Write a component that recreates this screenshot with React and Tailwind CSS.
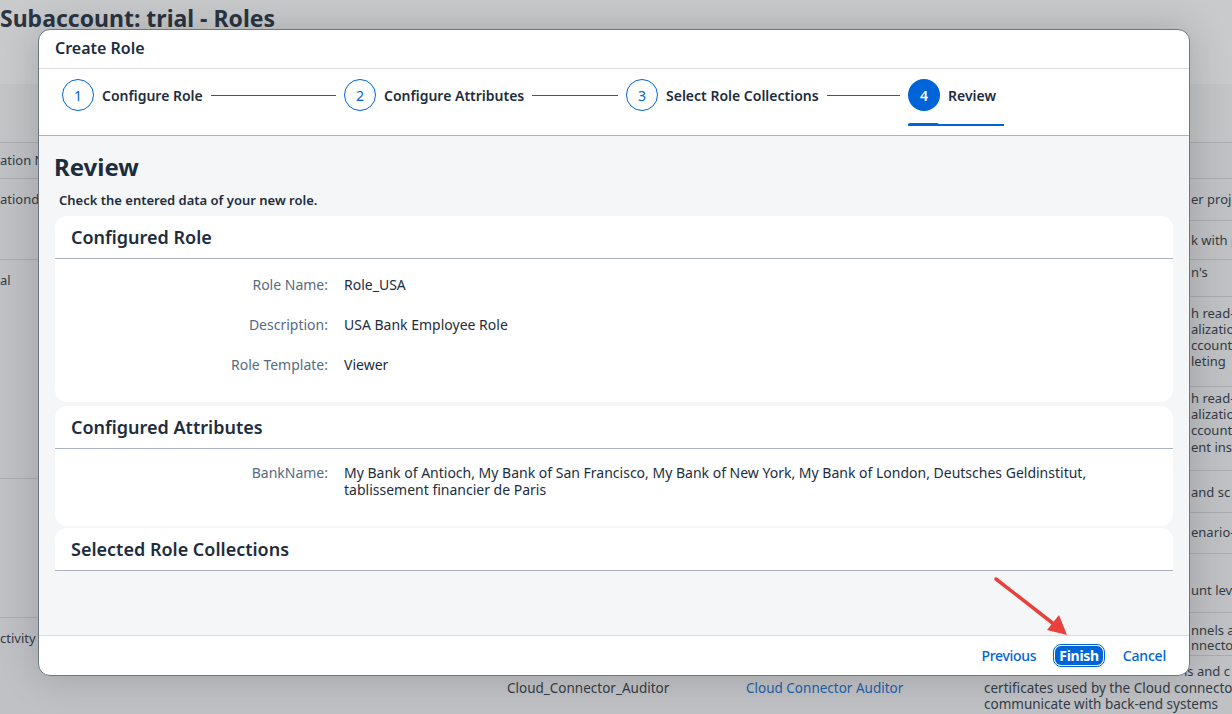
import React from 'react';

const font = { fontFamily: '"Noto Sans", "Open Sans", sans-serif' };

const rightBits = [
  ['er proje', 199], ['k with p', 240], ["n's", 272],
  ['h read-', 313], ['alization', 329], ['ccount', 345], ['leting', 361],
  ['h read-', 398], ['alization', 414], ['ccount', 430], ['ent insta', 447],
  ['and sc', 492], ['enario-r', 532], ['unt lev', 590],
  ['nnels ar', 630], ['nnector', 645],
];
const rightLines = [178, 220, 259, 296, 386, 470, 512, 553, 612, 655];
const leftLines = [178, 259, 478, 617];
const leftBits = [['ation N', 160], ['ationde', 199], ['al', 280], ['ctivity', 638]];

function Background() {
  return (
    <div className="absolute inset-0 bg-[#bfc1c4]">
      <div className="h-[84px] bg-[#c9cacb]" />
      <div className="h-[59px] bg-[#c2c4c6] border-b border-[#a9adb2]" />
      <div className="absolute left-0 top-[4px] text-[23px] font-bold text-[#2a3542] leading-[28px]">
        Subaccount: trial - Roles
      </div>
      {leftLines.map((y) => (
        <div key={y} className="absolute left-0 w-[40px] h-px bg-[#a9adb2]" style={{ top: y }} />
      ))}
      {rightLines.map((y) => (
        <div key={y} className="absolute left-[1180px] right-0 h-px bg-[#a9adb2]" style={{ top: y }} />
      ))}
      {leftBits.map(([t, y]) => (
        <div key={t} className="absolute left-0 text-[13px] leading-[16px] text-[#333c46] whitespace-nowrap" style={{ top: y - 8 }}>{t}</div>
      ))}
      {rightBits.map(([t, y], i) => (
        <div key={i} className="absolute left-[1191px] text-[13px] leading-[16px] text-[#333c46] whitespace-nowrap" style={{ top: y - 8 }}>{t}</div>
      ))}
      <div className="absolute left-[1184px] top-[663px] text-[13px] leading-[16px] text-[#333c46] whitespace-nowrap">ls and c</div>
      <div className="absolute left-[984px] top-[680px] text-[13.5px] leading-[16px] text-[#333c46] whitespace-nowrap">
        certificates used by the Cloud connector to<br />communicate with back-end systems
      </div>
      <div className="absolute left-[507px] top-[680px] text-[13.5px] leading-[16px] text-[#333c46]">Cloud_Connector_Auditor</div>
      <div className="absolute left-[746px] top-[680px] text-[13.5px] leading-[16px] text-[#1f5fa8]">Cloud Connector Auditor</div>
    </div>
  );
}

function Step({ n, label, last, active }) {
  return (
    <div className={last ? 'relative flex items-center pr-2 h-[32px]' : 'flex items-center w-[282px] h-[32px]'}>
      <div
        className={
          active
            ? 'w-[32px] h-[32px] rounded-full bg-[#0064d9] text-white text-[14px] font-semibold flex items-center justify-center shrink-0'
            : 'w-[32px] h-[32px] rounded-full border border-[#0064d9] bg-white text-[#0064d9] text-[14px] flex items-center justify-center shrink-0'
        }
      >
        {n}
      </div>
      <span className="ml-2 text-[14px] font-semibold text-[#1d2d3e] whitespace-nowrap">{label}</span>
      {!last && <div className="flex-1 h-px bg-[#0064d9] mx-2" />}
      {last && (
        <>
          <div className="absolute left-0 right-0 top-[45px] h-[2px] bg-[#0064d9]" />
          <div className="absolute left-0 w-[31px] top-[44px] h-[3px] rounded-t-[2px] bg-[#0064d9]" />
        </>
      )}
    </div>
  );
}

function Card({ title, children, className }) {
  return (
    <div className={'bg-white rounded-[12px] ' + (className || '')}>
      <div className="h-[43px] flex items-center px-4 border-b border-[#a9b4be]">
        <span className="text-[18px] font-semibold text-[#1d2d3e]">{title}</span>
      </div>
      {children}
    </div>
  );
}

function Row({ label, children }) {
  return (
    <div className="flex min-h-[40px] items-center">
      <div className="w-[273px] text-right text-[14px] text-[#556b82] shrink-0">{label}:</div>
      <div className="ml-4 text-[14px] text-[#1d2d3e] leading-[17px]">{children}</div>
    </div>
  );
}

function Dialog() {
  return (
    <div className="absolute left-[38px] top-[29px] w-[1152px] h-[647px] bg-white rounded-[12px] border border-[#6b7785] shadow-[0_0_40px_rgba(0,0,0,0.18)] flex flex-col overflow-hidden">
      <div className="h-[39px] shrink-0 flex items-center px-4 border-b border-[#d9dde1]">
        <span className="text-[16px] font-semibold text-[#1d2d3e] leading-[20px] -mt-[2px]">Create Role</span>
      </div>
      <div className="h-[67px] shrink-0 pt-[10px] pl-[23px] border-b border-[#a9b4be] flex items-start">
        <Step n="1" label="Configure Role" />
        <Step n="2" label="Configure Attributes" />
        <Step n="3" label="Select Role Collections" />
        <Step n="4" label="Review" last active />
      </div>
      <div className="flex-1 bg-[#f5f6f7] px-4 pt-[16px] flex flex-col">
        <h1 className="text-[24px] font-bold text-[#1d2d3e] leading-[30px] -ml-[1px]">Review</h1>
        <p className="mt-[10px] ml-1 text-[13px] font-semibold text-[#1d2d3e] leading-[16px]">
          Check the entered data of your new role.
        </p>
        <Card title="Configured Role" className="mt-[8px] pb-[18px]">
          <div className="pt-[5px]">
            <Row label="Role Name">Role_USA</Row>
            <Row label="Description">USA Bank Employee Role</Row>
            <Row label="Role Template">Viewer</Row>
          </div>
        </Card>
        <Card title="Configured Attributes" className="mt-[4px] pb-[28px]">
          <div className="pt-[15px] flex">
            <div className="w-[273px] text-right text-[14px] text-[#556b82] shrink-0 leading-[17px]">BankName:</div>
            <div className="ml-4 text-[14px] text-[#1d2d3e] leading-[17px] whitespace-nowrap">
              My Bank of Antioch, My Bank of San Francisco, My Bank of New York, My Bank of London, Deutsches Geldinstitut,<br />
              tablissement financier de Paris
            </div>
          </div>
        </Card>
        <Card title="Selected Role Collections" className="mt-[2px] rounded-b-none" />
      </div>
      <div className="h-[40px] shrink-0 border-t border-[#d9dde1] flex items-center justify-end pr-[15px]">
        <button className="px-2 h-[26px] text-[14px] font-medium tracking-[-0.3px] text-[#0064d9]">Previous</button>
        <span className="ml-[9px] rounded-[8px] border-[1.5px] border-[#0064d9] bg-white p-[1px]">
          <span className="block rounded-[6px] bg-[#0064d9] px-[4px] h-[19px] leading-[19px] text-[14px] font-bold tracking-[-0.3px] text-white">Finish</span>
        </span>
        <button className="ml-[10px] px-2 h-[26px] text-[14px] font-medium tracking-[-0.2px] text-[#0064d9]">Cancel</button>
      </div>
    </div>
  );
}

export default function App() {
  return (
    <div className="relative w-[1232px] h-[714px] overflow-hidden" style={font}>
      <Background />
      <Dialog />
      <svg className="absolute left-0 top-0 pointer-events-none" width="1232" height="714">
        <line x1="996" y1="579" x2="1055" y2="625" stroke="#e8413c" strokeWidth="3.5" strokeLinecap="round" />
        <polygon points="1067,635 1047,630 1059,615" fill="#e8413c" />
      </svg>
    </div>
  );
}
